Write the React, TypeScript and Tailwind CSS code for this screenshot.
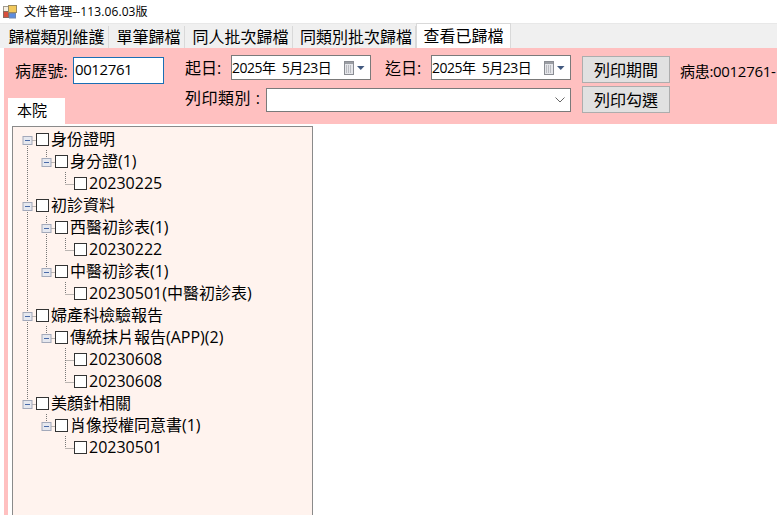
const tabs = [
  { label: "歸檔類別維護", w: "w-[105px] pl-[1px]" },
  { label: "單筆歸檔", w: "w-[76px] pl-[4px]" },
  { label: "同人批次歸檔", w: "w-[108px] pl-[4px]" },
  { label: "同類別批次歸檔", w: "w-[123px] pl-[4px]" },
];

type Row = { t: string; d: 0 | 1 | 2; top?: boolean; bottom?: boolean; root?: boolean; child?: boolean };

const rows: Row[] = [
  { t: "身份證明", d: 0, bottom: true },
  { t: "身分證(1)", d: 1, top: true, root: true },
  { t: "20230225", d: 2, top: true, root: true },
  { t: "初診資料", d: 0, top: true, bottom: true },
  { t: "西醫初診表(1)", d: 1, top: true, bottom: true, root: true },
  { t: "20230222", d: 2, top: true, root: true, child: true },
  { t: "中醫初診表(1)", d: 1, top: true, root: true },
  { t: "20230501(中醫初診表)", d: 2, top: true, root: true },
  { t: "婦產科檢驗報告", d: 0, top: true, bottom: true },
  { t: "傳統抹片報告(APP)(2)", d: 1, top: true, root: true },
  { t: "20230608", d: 2, top: true, bottom: true, root: true },
  { t: "20230608", d: 2, top: true, root: true },
  { t: "美顏針相關", d: 0, top: true },
  { t: "肖像授權同意書(1)", d: 1, top: true },
  { t: "20230501", d: 2, top: true },
];

function Dots({ x1, y1, x2, y2 }: { x1: number; y1: number; x2: number; y2: number }) {
  return <line x1={x1} y1={y1} x2={x2} y2={y2} stroke="#777" strokeWidth="1" strokeDasharray="1 1" />;
}

function Expander({ x }: { x: number }) {
  return (
    <g>
      <rect x={x - 4.5} y={8.5} width="9" height="8" fill="#e6e8ef" stroke="#a3a9ba" />
      <line x1={x - 2.5} y1={12.5} x2={x + 2.5} y2={12.5} stroke="#4a6aa8" />
    </g>
  );
}

function Guides({ r }: { r: Row }) {
  const widths = [23, 42, 61];
  const cx = [14.5, 33.5, 52.5][r.d];
  return (
    <svg width={widths[r.d]} height="22" className="shrink-0">
      {r.root && <Dots x1={14.5} y1={0} x2={14.5} y2={22} />}
      {r.child && <Dots x1={33.5} y1={0} x2={33.5} y2={22} />}
      {r.top && <Dots x1={cx} y1={0} x2={cx} y2={12} />}
      {r.bottom && <Dots x1={cx} y1={12} x2={cx} y2={22} />}
      <Dots x1={cx} y1={12.5} x2={widths[r.d]} y2={12.5} />
      {r.d < 2 && <Expander x={cx} />}
    </svg>
  );
}

function CalendarIcon() {
  return (
    <svg width="21" height="14" viewBox="0 0 21 14" className="shrink-0">
      <rect x="0.5" y="0.5" width="9" height="13" fill="#e4e5e9" stroke="#8a8d93" />
      <rect x="1" y="1" width="8" height="2" fill="#9a9da3" />
      <path d="M2 5h6M2 7h6M2 9h6M2 11h5" stroke="#8f9298" strokeDasharray="1 1" />
      <path d="M13 5h7.5l-3.75 4z" fill="#41597f" />
    </svg>
  );
}

function DatePicker() {
  return (
    <div className="flex h-[25px] w-[140px] items-center justify-between border border-[#7a7a7a] bg-white pl-[0px] pr-[5px] text-[14px] tracking-[-0.5px]">
      <span>2025年&nbsp;&nbsp;5月23日</span>
      <CalendarIcon />
    </div>
  );
}

function Btn({ label }: { label: string }) {
  return (
    <div className="mt-[1px] flex h-[27px] w-[88px] items-center justify-center border border-[#adadad] bg-[#e1e1e1] text-[16px]">
      {label}
    </div>
  );
}

export default function App() {
  return (
    <div
      className="flex h-[515px] w-[777px] flex-col overflow-hidden bg-white text-[16px] leading-[22px] text-black"
      style={{ fontFamily: '"Open Sans", "Noto Sans CJK TC", sans-serif' }}
    >
      <div className="flex h-[23px] shrink-0 items-center pl-[3px]">
        <svg width="15" height="14" viewBox="0 0 15 14" className="shrink-0">
          <rect x="0.5" y="1.5" width="5" height="5" fill="#f6f0e4" stroke="#a09a90" />
          <rect x="0.5" y="6.5" width="5" height="6" fill="#d8503c" stroke="#8a6a60" />
          <rect x="5.5" y="0.5" width="8" height="7" fill="#f2c95c" stroke="#9a8a60" />
          <rect x="6.5" y="8.5" width="6" height="4.5" fill="#5c8ce0" stroke="#7088b0" />
        </svg>
        <span className="ml-[6px] text-[12px] tracking-[0.1px]">文件管理--113.06.03版</span>
      </div>

      <div className="flex h-[25px] shrink-0 items-end border-t border-[#e8e8e8] bg-[#f0f0f0] pl-[4px]">
        {tabs.map((t) => (
          <div key={t.label} className={`flex h-[22px] items-center justify-center border-r border-[#d9d9d9] text-[16px] ${t.w}`}>
            {t.label}
          </div>
        ))}
        <div className="flex h-[25px] w-[95px] items-center justify-center border border-b-0 border-[#d9d9d9] bg-white text-[16px]">
          查看已歸檔
        </div>
      </div>

      <div className="ml-[4px] flex h-[76px] shrink-0 bg-[#ffc0c0]">
        <div className="flex w-[181px] shrink-0 flex-col justify-between">
          <div className="ml-[11px] mt-[9px] flex items-center">
            <span className="whitespace-nowrap tracking-[0.2px]">病歷號:</span>
            <div className="ml-[5px] flex h-[27px] w-[91px] items-center border border-[#1a6fb5] bg-white pb-[4px] pl-[1px] text-[15px] tracking-[-0.4px]">
              0012761
            </div>
          </div>
          <div className="ml-[4px] flex h-[26px] w-[57px] items-center justify-center bg-white pb-[2px] pr-[9px] text-[15px]">本院</div>
        </div>
        <div className="flex flex-col">
          <div className="mt-[7px] flex h-[28px] items-start">
            <span className="mt-[2px] w-[46px]">起日:</span>
            <DatePicker />
            <span className="ml-[14px] mt-[2px] w-[46px]">迄日:</span>
            <DatePicker />
            <div className="ml-[11px]">
              <Btn label="列印期間" />
            </div>
            <span className="ml-[10px] mt-[5px] whitespace-nowrap text-[15px] tracking-[-0.3px]">病患:0012761-</span>
          </div>
          <div className="mt-[2px] flex items-start">
            <span className="mt-[2px] w-[81px] whitespace-nowrap tracking-[0.5px]">列印類別 :</span>
            <div className="mt-[3px] flex h-[24px] w-[305px] items-center justify-end border border-[#7a7a7a] bg-white pr-[4px]">
              <svg width="12" height="8" viewBox="0 0 12 8">
                <path d="M1.5 1.5 6 6l4.5-4.5" fill="none" stroke="#666" strokeWidth="1" />
              </svg>
            </div>
            <div className="ml-[11px]">
              <Btn label="列印勾選" />
            </div>
          </div>
        </div>
      </div>

      <div className="ml-[4px] flex min-h-0 flex-1 border-l-[4px] border-[#ffc0c0] pl-[4px] pt-[2px]">
        <div className="w-[301px] border-[1px] border-b-0 border-[#8a8a8a] bg-[#fff3ee] pt-[1px]">
          {rows.map((r, i) => (
            <div key={i} className="flex h-[22px] items-center whitespace-nowrap">
              <Guides r={r} />
              <div className="mt-[1px] h-[13px] w-[13px] shrink-0 border border-[#333] bg-white" />
              <span className="ml-[2px]">{r.t}</span>
            </div>
          ))}
        </div>
      </div>
    </div>
  );
}
